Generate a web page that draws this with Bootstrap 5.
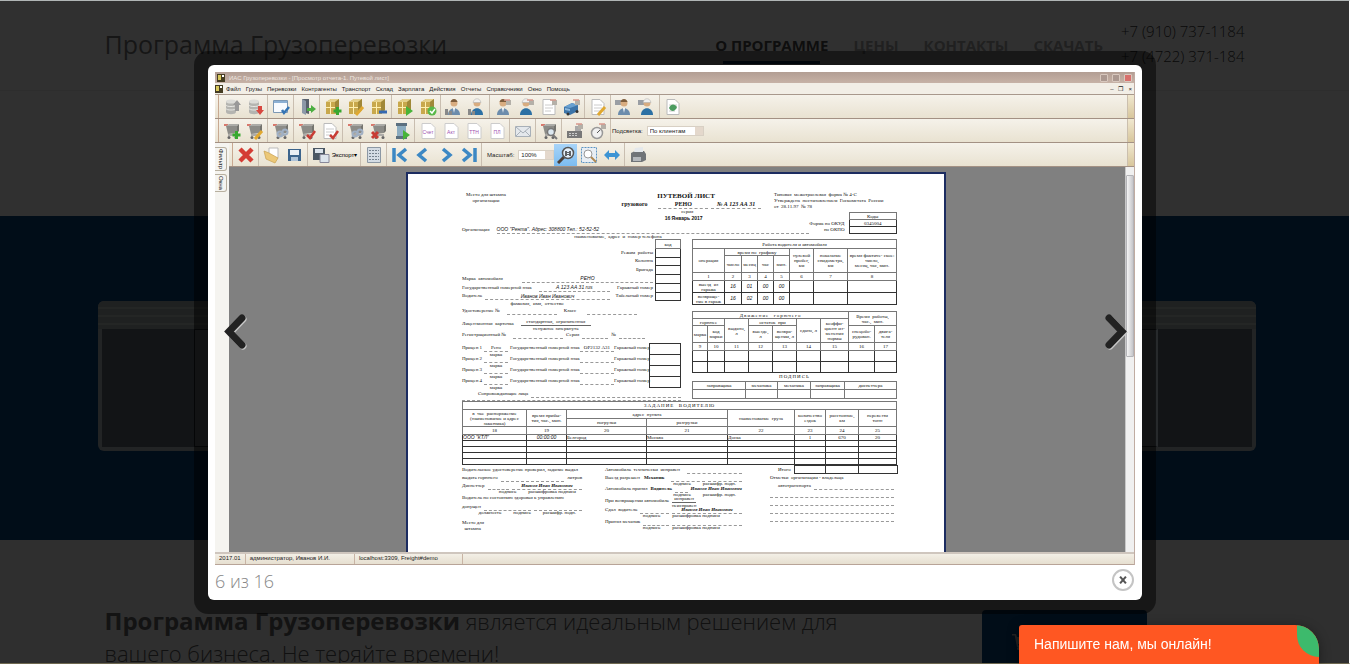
<!DOCTYPE html>
<html lang="ru">
<head>
<meta charset="utf-8">
<meta name="viewport" content="width=device-width, initial-scale=1">
<title>Программа Грузоперевозки</title>
<link href="https://cdn.jsdelivr.net/npm/bootstrap@5.3.0/dist/css/bootstrap.min.css" rel="stylesheet">
<style>
html,body{height:100%;overflow:hidden}
body{font-family:"Open Sans",sans-serif;background:#e8e8e8}
.site{height:100%;overflow:hidden;border-top:1px solid #b0b5b5;border-bottom:1px solid #6e6850;border-right:1px solid #fff;background:#e8e8e8}
.wrap{max-width:1140px;margin:0 auto}
.top{height:90px;background:#f0f0f0;border-bottom:1px solid #dedede}
.brand{font-size:25px;line-height:30px;color:#707070;text-decoration:none}
.menu{gap:25px;font-size:15px;font-weight:700;line-height:20px}
.menu a{color:#a0a0a0;text-decoration:none;padding-bottom:6px}
.menu a.on{color:#484848;position:relative}
.menu a.on::after{content:"";position:absolute;left:8px;right:8px;bottom:-3px;height:3px;background:#05417a}
.phones{font-size:15px;font-weight:300;line-height:25px;color:#333;padding:0 0 4px 18px}
.intro{height:125px;background:#f0f0f0}
.slides{background:#05417a;height:324px;padding:0 0 4px 4px}
.slides .inner{max-width:1158px;margin:0 auto}
.thumb{width:300px;height:150px;border-radius:6px;overflow:hidden;background:#d4d0c8;opacity:.8;padding:0 4px 4px}
.thumb .bars{height:28px;margin:0 -4px;background:repeating-linear-gradient(#c4bcb0 0 6px,#e0dccc 6px 8px)}
.thumb .desk{height:118px;background:#707070}
.thumb .leaf{background:#e0e0e0;border:1px solid #444}
.leaf.la{width:200px}.leaf.ra{width:200px;margin-right:94px;border-right:3px solid #f4f4f4}
.promo{padding:65px 98px 0 0}
.lead-txt{font-size:22px;line-height:32px;font-weight:300;color:#555}
.lead-txt b{font-size:24px;font-weight:700;color:#606060}
.buy{width:165px;height:60px;margin-top:5px;background:#05417a;border:0;border-radius:4px;color:#aaa}
.veil{position:fixed;inset:1px 1px 1px 0;background:rgba(0,0,0,.8)}
.stage{position:fixed;inset:0;padding-top:51px}
.frame{width:962px;padding:14px;border-radius:14px;background:rgba(0,0,0,.5)}
.box{background:#fff;border-radius:6px;padding:7px;position:relative}
.step{position:absolute;top:246px;width:28px;height:42px;border:0;padding:0;background:none}
.step.prev{left:14px}.step.next{right:12px}
.count{font-size:18px;font-weight:300;line-height:24px;color:#888}
.shut{width:22px;height:22px;border:2px solid #c4c4c4;border-radius:50%;background:#fff;padding:0;line-height:0;margin-right:1px}
.foot{height:28px;padding-top:4px}
/* application window */
.app{font:6px/8px "Liberation Sans",sans-serif;color:#222;background:#f2eee6;border-right:1px solid #c0aca2}
.tbar{height:11px;background:linear-gradient(#b29e94,#c7b2a6);color:#eee6e0;padding:0 2px}
.tbar i{width:8px;height:8px;border:1px solid #d8c8be;border-radius:1px;background:#ab9890}
.tbar i:last-child{background:#d8706c}
.mbar{height:12px;padding:0 2px 0 0;gap:5px;border-bottom:1px solid #a8988c}
.mbar svg{margin-right:-2px}
.mbar a{color:#222;text-decoration:none}
.tool{height:24px;background:linear-gradient(#f5f2ea,#e9e2d1);border-bottom:1px solid #a39184;padding-left:3px}
.tool .grp{padding:0 1px;border-right:1px solid #c9beb0;height:100%}
.tool .grp:nth-last-child(2){border-right:0}
.tool .grp:first-child{border-left:1px solid #c8a890}
.tool button{width:23px;height:22px;border:0;padding:0;background:none;line-height:0}
.tool button.text{width:50px;line-height:8px;white-space:nowrap;text-align:left;padding-left:3px}
.tool button.act{background:linear-gradient(#a8d4f8,#7cbcf0)}
.tool svg{width:18px;height:18px}
.tool .end{width:7px;background:linear-gradient(#f0e8d0,#d8c69c);border-left:1px solid #cbbfae}
.tool select{appearance:none;font:6px/8px "Liberation Sans",sans-serif;height:10px;border:1px solid #d8d0c4;border-radius:0;padding:0 2px;color:#222;background:#fff linear-gradient(90deg,#e4d8cc,#e4d8cc) right/8px 100% no-repeat}
.s1{width:57px}.s2{width:36px}
.rail{width:14px;background:#f5f4f0}
.rail span{display:block;writing-mode:vertical-rl;width:12px;line-height:11px;border:1px solid #b8b0a0;border-left:0;border-radius:0 3px 3px 0;padding:1px 0;margin-bottom:3px}
.work{background:#808080;height:385px;overflow:hidden}
.scr{width:9px;background:#f0f0f0;border-left:1px solid #c8c8c8;padding-top:8px}
.scr div{height:182px;border:1px solid #b4b4b8;border-radius:1px;background:linear-gradient(90deg,#f4f4f4,#c6c6ca)}
.sbar{height:13px;border-top:2px solid #cfc6be;border-bottom:1px solid #b8a498;background:linear-gradient(#f3efe6,#e6dfd0)}
.sbar span{border-right:1px solid #c8b4a4;padding:0 4px;line-height:9px}
/* waybill */
.paper{width:540px;margin-left:177px;margin-top:5px;padding:18px 47px 0 54px;background:#fff;border:1px solid #1c2c60;border-width:2px 2px 0;font:5px/6px "Liberation Serif",serif;color:#111;white-space:nowrap;height:400px}
.head{display:grid;grid-template-columns:48px 1fr 150px 13px 123px;height:20px}
.ttl{font-size:7px;font-weight:700;line-height:8px;color:#111}
.sub{font-size:6px;font-weight:700;line-height:8px}
.it{font-family:"Liberation Sans",sans-serif;font-style:italic}
.bi{font-weight:700;font-style:italic}
.codes{height:22px}
.codes .l{width:351px}
.date{font:700 5px/13px "Liberation Sans",sans-serif;padding:0 48px 0 144px}
.ln{display:flex;height:9px;line-height:9px;gap:3px}
.ln.s8,.ln .s8{height:8px;line-height:8px}
.ln.s3{height:3px;line-height:3px}
.org{width:312px;height:5px}
.fio{width:150px}
.mb2{margin-bottom:2px}.mt2{margin-top:2px}.mt6{margin-top:6px}
.dt{flex:1 1 0;border-bottom:1px dashed #999;text-align:center;min-width:0}
.d25{flex:0 0 26px}.d50{flex:0 0 50px}.d70{flex:0 0 70px}
.pr{width:40px;text-align:right}
.colA{width:219px;margin-right:11px}
.colB{width:206px}
.u{width:193px;padding-right:2px}
table.g{border-collapse:collapse;table-layout:fixed;width:100%;line-height:5px}
.g td,.g th{border:1px solid #777;padding:0;text-align:center;vertical-align:middle;font-weight:400;overflow:visible}
.g .k td{border-color:#333}
.q6{height:6px}.q7{height:7px}.q8{height:8px}.q9{height:9px}.q11{height:11px}.q12{height:12px}.q17{height:17px}
.g.code{width:26px}.g.codeb{width:49px}.g.trl{width:32px}
.wide{letter-spacing:1px}
.tr4{display:grid;grid-template-columns:22px 24px 2px 70px 34px 35px;height:11px;line-height:9px}
.tr4 small{display:block;font-size:5px;line-height:6px;text-align:center}
.tr4 .dt{height:9px}
.fr{line-height:6px;text-align:center}
.fr u{display:block;text-decoration:none;border-bottom:1px solid #666}
.sig{display:grid;grid-template-columns:124px 163px 149px}
.sig .c1{padding-right:4px}.sig .c2{padding-left:19px;padding-right:7px}.sig .c3{padding-left:21px}
.cap{display:flex;height:3px;line-height:3px;justify-content:flex-end;gap:12px;padding-right:6px}
.c3 .tot{width:104px}
/* chat */
.chat{position:fixed;right:31px;bottom:0;width:300px;height:39px;border:0;text-align:left;background:#ff5722;color:#fff;font:14px/39px "Liberation Sans",sans-serif;padding:0 15px;border-radius:3px 24px 0 0;box-shadow:0 2px 12px rgba(0,0,0,.4);overflow:hidden}
.chat::after{content:"";position:absolute;right:0;top:0;width:22px;height:32px;background:#3dba6c;border-radius:0 22px 0 22px}
</style>
</head>
<body>
<div class="site">
  <header class="top"><div class="wrap d-flex align-items-center h-100">
    <a class="brand me-auto mb-1" href="#">Программа Грузоперевозки</a>
    <nav class="menu d-flex pt-1"><a class="on" href="#">О ПРОГРАММЕ</a><a href="#">ЦЕНЫ</a><a href="#">КОНТАКТЫ</a><a href="#">СКАЧАТЬ</a></nav>
    <div class="phones">+7 (910) 737-1184<br>+7 (4722) 371-184</div>
  </div></header>
  <div class="intro"></div>
  <section class="slides d-flex align-items-center"><div class="inner w-100 d-flex justify-content-between">
    <div class="thumb"><div class="bars"></div><div class="desk d-flex"><div class="leaf la ms-auto"></div></div></div>
    <div class="thumb"><div class="bars"></div><div class="desk d-flex"><div class="leaf ra"></div></div></div>
  </div></section>
  <main class="wrap promo d-flex justify-content-between align-items-start">
    <p class="lead-txt mb-0"><b>Программа Грузоперевозки</b> является идеальным решением для<br>вашего бизнеса. Не теряйте времени!</p>
    <button class="buy text-start" aria-label="Купить"><svg class="ms-4" width="18" height="16" viewBox="0 0 18 16" fill="currentColor"><path d="M0 0h4l1 3h12l-2 7H6l.4 1.500H15V13H5L2.700 1.500H0z"/><circle cx="6.500" cy="14.500" r="1.500"/><circle cx="13.500" cy="14.500" r="1.500"/></svg></button>
  </main>
</div>
<div class="veil"></div>
<div class="stage d-flex justify-content-center align-items-start">
 <div class="frame mw-100"><div class="box">
  <div class="app">
   <div class="tbar d-flex align-items-center gap-1"><svg width="8" height="8"><path fill="#443c22" d="M0 0h8v8H0z"/><path fill="#d8c85c" d="M1 1h3v5H1z"/><path fill="#fff" d="M5 1h2v2H5z"/></svg><span class="me-auto">ИАС Грузоперевозки - [Просмотр отчета-1. Путевой лист]</span><i></i><i></i><i></i></div>
   <div class="mbar d-flex align-items-center"><svg width="8" height="8"><path fill="#443c22" d="M0 0h8v8H0z"/><path fill="#d8c85c" d="M1 1h3v5H1z"/><path fill="#fff" d="M5 1h2v2H5z"/></svg><a href="#">Файл</a><a href="#">Грузы</a><a href="#">Перевозки</a><a href="#">Контрагенты</a><a href="#">Транспорт</a><a href="#">Склад</a><a href="#">Зарплата</a><a href="#">Действия</a><a href="#">Отчеты</a><a href="#">Справочники</a><a href="#">Окно</a><a href="#" class="me-auto">Помощь</a><span>–</span><span>❐</span><span>×</span></div>
   <div class="tool d-flex align-items-stretch" id="bar1"><div class="end ms-auto"></div></div>
   <div class="tool d-flex align-items-stretch" id="bar2"><div class="grp d-flex align-items-center gap-1"><label for="hl">Подсветка:</label><select id="hl" class="s1"><option>По клиентам</option></select></div><div class="end ms-auto"></div></div>
   <div class="d-flex">
    <div class="rail pt-1"><span>Фильтр</span><span>Окна</span></div>
    <div class="flex-fill">
     <div class="tool d-flex align-items-stretch" id="bar3"><div class="end ms-auto"></div></div>
     <div class="d-flex"><div class="work flex-fill">
<div class="paper">
 <div class="head">
  <div class="text-center">Место для штампа<br>организации</div><div></div>
  <div><div class="ttl text-center">ПУТЕВОЙ ЛИСТ</div>
   <div class="ln sub"><span class="me-2">&nbsp; &nbsp; &nbsp; &nbsp;грузового</span><span class="dt">РЕНО</span><span class="dt bi">№ А 123 АА 31</span></div><div class="text-center fr">&nbsp; серия</div></div><div></div>
  <div>Типовая&nbsp; межотраслевая&nbsp; форма № 4-С<br>Утверждена&nbsp; постановлением&nbsp; Госкомстата&nbsp; России<br>от&nbsp; 28.11.97&nbsp; № 78</div>
 </div>
 <div class="codes d-flex">
  <div class="l"><div class="date text-center">16 Январь 2017</div><div class="ln"><span class="me-1">Организация</span><span class="dt it text-start">ООО "Рента". Адрес: 308800 Тел.: 52-52-52</span></div></div>
  <div class="flex-fill pe-1 d-flex flex-column align-items-end"><span class="ln"></span><span>Форма по ОКУД</span><span>по ОКПО</span></div>
  <table class="g codeb"><tr class="q7"><th>Коды</th></tr><tr class="q7 k"><td>0345004</td></tr><tr class="q7 k"><td></td></tr></table>
 </div>
 <div class="fr org">наименование,&nbsp; адрес&nbsp; и&nbsp; номер телефона</div>
 <div class="d-flex">
  <div class="colA">
   <div class="d-flex">
    <div class="u"><div class="ln"></div><div class="ln justify-content-end">Режим&nbsp; работы</div><div class="ln s8 justify-content-end">Колонна</div><div class="ln justify-content-end">Бригада</div>
     <div class="ln"><span class="me-3">Марка&nbsp; автомобиля</span><span class="dt it">РЕНО</span></div>
     <div class="ln"><span class="me-1">Государственный номерной знак</span><span class="dt it">А 123 АА 31 rus</span><span class="pr">Гаражный номер</span></div>
     <div class="ln s8"><span>Водитель</span><span class="dt it">Иванов Иван Иванович</span><span class="pr">Табельный номер</span></div></div>
    <table class="g code"><tr class="q9"><th>код</th></tr><tr class="q9 k"><td></td></tr><tr class="q8 k"><td></td></tr><tr class="q9 k"><td></td></tr><tr class="q9 k"><td></td></tr><tr class="q9 k"><td></td></tr><tr class="q8 k"><td></td></tr></table>
   </div>
   <div class="fr fio">фамилия,&nbsp; имя,&nbsp; отчество</div>
   <div class="ln s8"><span class="me-1">Удостоверение №</span><span class="dt d50"></span><span class="ms-1">Класс</span><span class="dt d50 ms-2"></span></div>
   <div class="ln mt-1 mb2"><span class="me-1">Лицензионная&nbsp; карточка</span><div class="fr d70"><u>стандартная,&nbsp; ограниченная</u>ненужное зачеркнуть</div></div>
   <div class="ln mb-1"><span class="me-1">Регистрационный №</span><span class="dt d50"></span><span>Серия</span><span class="dt d25"></span><span>№</span><span class="dt d25"></span></div>
   <div class="d-flex"><div class="flex-fill" id="trailers"></div>
    <table class="g trl"><tr class="q11 k"><td></td></tr><tr class="q11 k"><td></td></tr><tr class="q11 k"><td></td></tr><tr class="q11 k"><td></td></tr></table></div>
   <div class="ln mt2 s8"><span class="ms-3">Сопровождающие лица</span><span class="dt"></span></div>
   <div class="ln s3"><span class="dt"></span></div>
  </div>
  <div class="colB">
   <table class="g"><colgroup><col width="32"><col width="17"><col width="16"><col width="16"><col width="16"><col width="24"><col width="34"><col></colgroup>
    <tr class="q9"><th colspan="8">Работа водителя и автомобиля</th></tr>
    <tr class="q7"><th rowspan="2">операция</th><th colspan="4">время по&nbsp; графику</th><th rowspan="2">нулевой<br>пробег,<br>км</th><th rowspan="2">показание<br>спидометра,<br>км</th><th rowspan="2">время фактиче- ское:<br>число,<br>месяц, час, мин.</th></tr>
    <tr class="q17"><th>число</th><th>месяц</th><th>час</th><th>мин.</th></tr>
    <tr class="q8"><td>1</td><td>2</td><td>3</td><td>4</td><td>5</td><td>6</td><td>7</td><td>8</td></tr>
    <tr class="q12 k"><td>выезд&nbsp; из<br>гаража</td><td class="it">16</td><td class="it">01</td><td class="it">00</td><td class="it">00</td><td></td><td></td><td></td></tr>
    <tr class="q12 k"><td>возвраще-<br>ние в гараж</td><td class="it">16</td><td class="it">02</td><td class="it">00</td><td class="it">00</td><td></td><td></td><td></td></tr></table>
   <table class="g mt6"><colgroup><col width="15"><col width="17"><col width="24"><col width="24"><col width="24"><col width="24"><col width="28"><col width="26"><col></colgroup>
    <tr class="q7"><th colspan="7" class="wide">Движение&nbsp; горючего</th><th colspan="2" rowspan="2">Время&nbsp; работы,<br>час.,&nbsp; мин.</th></tr>
    <tr class="q7"><th colspan="2">горючее</th><th rowspan="2">выдано,<br>л</th><th colspan="2">остаток&nbsp; при</th><th rowspan="2">сдано, л</th><th rowspan="2">коэффи-<br>циент из-<br>менения<br>нормы</th></tr>
    <tr class="q17"><th>марка</th><th>код<br>марки</th><th>выезде,<br>л</th><th>возвра-<br>щении, л</th><th>спецобо-<br>рудован.</th><th>двига-<br>теля</th></tr>
    <tr class="q8"><td>9</td><td>10</td><td>11</td><td>12</td><td>13</td><td>14</td><td>15</td><td>16</td><td>17</td></tr>
    <tr class="q11 k"><td></td><td></td><td></td><td></td><td></td><td></td><td></td><td></td><td></td></tr>
    <tr class="q11 k"><td></td><td></td><td></td><td></td><td></td><td></td><td></td><td></td><td></td></tr></table>
   <div class="ln s8 justify-content-center wide">ПОДПИСЬ</div>
   <table class="g"><colgroup><col width="53"><col width="32"><col width="33"><col width="34"><col></colgroup>
    <tr class="q8"><th>заправщика</th><th>механика</th><th>механика</th><th>заправщика</th><th>диспетчера</th></tr>
    <tr class="q9"><td></td><td></td><td></td><td></td><td></td></tr></table>
  </div>
 </div>
 <table class="g"><colgroup><col width="64"><col width="40"><col width="80"><col width="81"><col width="67"><col width="31"><col width="33"><col></colgroup>
  <tr class="q8"><th colspan="8" class="wide">ЗАДАНИЕ&nbsp; ВОДИТЕЛЮ</th></tr>
  <tr class="q9"><th rowspan="2">в&nbsp; чье&nbsp; распоряжение<br>(наименование и адрес<br>заказчика)</th><th rowspan="2">время прибы-<br>тия, час., мин.</th><th colspan="2">адрес&nbsp; пункта</th><th rowspan="2">наименование&nbsp; груза</th><th rowspan="2">количество<br>ездок</th><th rowspan="2">расстояние,<br>км</th><th rowspan="2">перевезти<br>тонн</th></tr>
  <tr class="q8"><th>погрузки</th><th>разгрузки</th></tr>
  <tr class="q8"><td>18</td><td>19</td><td>20</td><td>21</td><td>22</td><td>23</td><td>24</td><td>25</td></tr>
  <tr class="q6 k"><td class="it text-start">ООО "КТЛ"</td><td class="it">00:00:00</td><td class="text-start">Белгород</td><td class="text-start">Москва</td><td class="text-start">Доска</td><td>1</td><td>670</td><td>20</td></tr>
  <tr class="q6 k"><td></td><td></td><td></td><td></td><td></td><td></td><td></td><td></td></tr>
  <tr class="q6 k"><td></td><td></td><td></td><td></td><td></td><td></td><td></td><td></td></tr>
  <tr class="q6 k"><td></td><td></td><td></td><td></td><td></td><td></td><td></td><td></td></tr>
  <tr class="q6 k"><td></td><td></td><td></td><td></td><td></td><td></td><td></td><td></td></tr></table>
 <div class="sig">
  <div class="c1"><div class="ln">Водительское удостоверение проверил, задание выдал</div>
   <div class="ln s8"><span>выдать горючего</span><span class="dt"></span><span>литров</span></div>
   <div class="ln s8"><span>Диспетчер</span><span class="dt"></span><span class="dt d70 bi">Иванов Иван Иванович</span></div><div class="cap"><span>подпись</span><span>расшифровка подписи</span></div>
   <div class="ln">Водитель по состоянию здоровья к управлению</div>
   <div class="ln"><span>допущен</span><span class="dt"></span><span class="dt"></span></div><div class="cap"><span>должность</span><span>подпись</span><span>расшифр. подп.</span></div>
   <div class="mt6">Место для<br>&nbsp; штампа</div></div>
  <div class="c2"><div class="ln"><span>Автомобиль&nbsp; технически&nbsp; исправен</span><span class="dt ms-1"></span></div>
   <div class="ln s8"><span>Выезд разрешен</span><b>&nbsp;Механик</b><span class="dt ms-1"></span><span class="dt"></span></div><div class="cap"><span>подпись</span><span>расшифр. подп.</span></div>
   <div class="ln s8"><span>Автомобиль принял</span><b>Водитель</b><span class="dt"></span><span class="d50 bi">Иванов Иван Иванович</span></div><div class="cap"><span>подпись</span><span>расшифр. подп.</span></div>
   <div class="ln"><span>При возвращении автомобиль</span><div class="fr"><u>исправен</u>неисправен</div></div>
   <div class="ln"><span>Сдал&nbsp; водитель</span><span class="dt"></span><span class="dt d70 bi">Иванов Иван Иванович</span></div><div class="cap"><span>подпись</span><span class="me-3">расшифровка подписи</span></div>
   <div class="ln"><span>Принял механик</span><span class="dt"></span><span class="dt d70"></span></div><div class="cap"><span>подпись</span><span class="me-3">расшифровка подписи</span></div></div>
  <div class="c3"><div class="d-flex justify-content-between align-items-center"><span class="ms-2">Итого</span><table class="g tot"><colgroup><col width="31"><col width="33"><col></colgroup><tr class="q8 k"><td></td><td></td><td></td></tr></table></div>
   <div class="ln s8">Отметки&nbsp; организации - владельца</div>
   <div class="ln s8 pe-1"><span class="ms-2">автотранспорта</span><span class="dt"></span></div>
   <div class="ln s8 pe-1"><span class="dt"></span></div><div class="ln s8 pe-1"><span class="dt"></span></div><div class="ln s8 pe-1"><span class="dt"></span></div><div class="ln s8 pe-1"><span class="dt"></span></div></div>
 </div>
</div>
     </div><div class="scr"><div></div></div></div>
    </div>
   </div>
   <div class="sbar d-flex"><span>2017.01</span><span class="pe-4">администратор, Иванов И.И.</span><span class="pe-4">localhost:3309, Freight#demo</span></div>
  </div>
  <div class="foot d-flex justify-content-between align-items-start"><span class="count">6 из 16</span>
   <button class="shut" aria-label="Закрыть"><svg width="10" height="10" viewBox="0 0 12 12" stroke="#555" stroke-width="2.500"><path d="M2.500 2l7 8M9.500 2l-7 8"/></svg></button></div>
  <button class="step prev" aria-label="Назад"><svg width="28" height="42" viewBox="0 0 28 42" fill="none" stroke-width="7" stroke-linecap="round" stroke-linejoin="miter"><path stroke="#c8c8c8" d="M21 8L8 21.500 21 35"/><path stroke="#222" d="M20 7L7 20.500 20 34"/></svg></button>
  <button class="step next" aria-label="Вперёд"><svg width="28" height="42" viewBox="0 0 28 42" fill="none" stroke-width="7" stroke-linecap="round"><path stroke="#c8c8c8" d="M8 8l13 13.500L8 35"/><path stroke="#222" d="M7 7l13 13.500L7 34"/></svg></button>
 </div></div>
</div>
<button class="chat">Напишите нам, мы онлайн!</button>
<script>
const P={
 db:'<path fill="#b4b4b0" d="M3 3v11c0 3 10 3 10 0V3z"/><ellipse cx="8" cy="3.500" rx="5" ry="2" fill="#dcdcd8"/><path d="M3 7c0 2 10 2 10 0M3 10.500c0 2 10 2 10 0" fill="none" stroke="#e8e8e4"/>',
 up:'<path fill="#999" d="M14 2l4 5h-2v6h-4V7h-2z"/>',down:'<path fill="#d84840" d="M14 17l-4-5h2V8h4v4h2z"/>',
 win:'<path fill="#f8fbff" stroke="#7c98b4" d="M1.500 2.500h14v12h-14z"/><path fill="#8cb0d4" d="M2 3h13v2H2z"/>',blue:'<path stroke="#3474b4" stroke-width="2.500" fill="none" d="M10 12l2 3 5-6"/>',
 door:'<path fill="#58606c" d="M4 1h7v15l-7-2z"/><path fill="#8c98a8" d="M4 1l4 2v14l-4-2z"/><path fill="#4cae40" d="M9 10h4V7l5 4-5 4v-2H9z"/>',
 box:'<path fill="#c8a84c" d="M2 4l5-3h8v11l-4 4H2z"/><path fill="#e4d08c" d="M2 4l5-3h8l-4 3z"/><path fill="#a08838" d="M11 4l4-3v11l-4 4z"/><path stroke="#fff0b0" d="M6.500 4v12M2 9.500h9"/>',
 plus:'<path stroke="#38a830" stroke-width="3" d="M13.500 9v8M9.500 13h8"/>',pen:'<path stroke="#e0a830" stroke-width="3" d="M9 17l7-8"/>',minus:'<path stroke="#3468b0" stroke-width="3" d="M9 14h8"/>',
 play:'<path fill="#48b438" d="M10 8l7 5-7 5z"/>',ok:'<circle cx="13" cy="13" r="4.500" fill="#58b848"/><path stroke="#fff" stroke-width="1.500" fill="none" d="M11 13l2 2 3-4"/>',
 man:'<circle cx="9" cy="5" r="3.500" fill="#d8ac80"/><path fill="#7c5c3c" d="M5.500 4c1-4 6-4 7 0z"/><path fill="#6c8cac" d="M3 17c0-9 12-9 12 0z"/><path fill="#fff" d="M8 10h2l-1 5z"/>',
 wrk:'<circle cx="9" cy="5" r="3.500" fill="#d8ac80"/><path fill="#f0f0f0" stroke="#aaa" stroke-width=".5" d="M5 4.500c1-5 7-5 8 0z"/><path fill="#2c70a4" d="M3 17c0-9 12-9 12 0z"/>',
 fl:'<path fill="#888" d="M0 11h3v6H0zM4 13h3v4H4z"/>',tag:'<path fill="#b4b0a8" d="M12 2h5v5h-5z"/><path stroke="#d8988c" stroke-width="1.500" d="M10 2h6"/>',
 doc:'<path fill="#fff" stroke="#bbb" d="M3 1.500h8l4 4v11H3z"/><path stroke="#ccc" d="M5 7h8M5 10h8M5 13h6"/>',
 truck:'<path fill="#3c74a8" d="M1 9l8-4 6 2v6l-8 4-6-2z"/><path fill="#8cb8dc" d="M2 10l5 1v2l-5-1z"/><path fill="#68a0d0" d="M1 9l8-4 6 2-8 3z"/><circle cx="5" cy="16" r="1.500" fill="#333"/><circle cx="14" cy="13.500" r="1.500" fill="#333"/>',
 cam:'<path fill="#9a9ea4" d="M0 2h7v5H0z"/>',
 cart:'<path stroke="#d8786c" stroke-width="2" d="M1 3h4"/><path fill="#8c8c88" d="M3 4h11v7l-9 1z"/><path fill="#acaca8" d="M3 4l3-2h10l-2 2z"/><path fill="#74746f" d="M14 4l2-2v7l-2 2z"/><path stroke="#999" stroke-width="1.500" d="M5 13h9"/><circle cx="6" cy="15.500" r="1.500" fill="#666"/><circle cx="13" cy="15.500" r="1.500" fill="#666"/>',
 ref:'<circle cx="8" cy="12" r="2.500" fill="none" stroke="#a0b0c4" stroke-width="2"/><circle cx="13" cy="10" r="2.500" fill="none" stroke="#a0b0c4" stroke-width="2"/>',
 red:'<path stroke="#c83c34" stroke-width="2.500" fill="none" d="M9 13l3 3 5-7"/>',rx:'<path stroke="#c83c34" stroke-width="3" d="M2 10l6 6M8 10l-6 6"/>',
 glass:'<path fill="#8cacc0" d="M4 2h9v13H4z"/><path fill="#5c7080" d="M3 1h11v3H3zM3 14h11v3H3z"/>',
 mail:'<path fill="#e4e8ec" stroke="#a8b0b8" d="M1.500 4.500h15v10h-15z"/><path fill="none" stroke="#a8b0b8" d="M2 5l7 6 7-6M2 14l5-5M16 14l-5-5"/>',
 lens:'<circle cx="11" cy="10" r="3.500" fill="#dce8f0" stroke="#777" stroke-width="1.500"/><path stroke="#777" stroke-width="2" d="M13 13l4 4"/>',
 reg:'<path fill="#787878" d="M1 9h15v7H1z"/><path stroke="#ccc" d="M3 11.500h8M3 13.500h8" stroke-dasharray="2 1"/><path fill="#aaa" d="M9 4h6v5H9z"/>',
 clock:'<circle cx="8" cy="11" r="5.500" fill="#f0f0f0" stroke="#999" stroke-width="1.500"/><path stroke="#555" d="M8 11l3-3"/>',
 leaf:'<path fill="#4c9c60" d="M5 10c2-5 6-4 8-1-2 5-6 5-8 1z"/>',
 del:'<path stroke="#d43c34" stroke-width="4.500" d="M3 3l12 12M15 3L3 15"/>',
 open:'<path fill="#fff" stroke="#bbb" d="M6 2h9v10H6z"/><path fill="#ecc878" stroke="#c8a050" stroke-width=".7" d="M1 5l5 2 9 5-3 5-9-4z"/>',
 save:'<path fill="#3c648c" d="M2 3h13v12H2z"/><path fill="#e8eef4" d="M4 4h9v5H4z"/><path fill="#b0c4d8" d="M5 11h7v4H5z"/>',
 exp:'<path fill="#4c5864" d="M1 2h12v12H1z"/><path fill="#dce4ec" d="M3 3h8v4H3zM8 9h9v7H8z"/><path stroke="#889" fill="none" d="M8 8.500h9v8H8z"/>',
 list:'<path fill="#d4dce4" stroke="#8c98a4" d="M2.500 1.500h13v15h-13z"/><path stroke="#76828e" stroke-dasharray="2 1" d="M4 4.500h10M4 7.500h10M4 10.500h10M4 13.500h10"/>',
 first:'<path stroke="#3c88c4" stroke-width="3.500" fill="none" d="M3 2v14M15 3L8 9l7 6"/>',prev:'<path stroke="#3c88c4" stroke-width="3.500" fill="none" d="M12 3L5 9l7 6"/>',
 next:'<path stroke="#3c88c4" stroke-width="3.500" fill="none" d="M6 3l7 6-7 6"/>',last:'<path stroke="#3c88c4" stroke-width="3.500" fill="none" d="M3 3l7 6-7 6M15 2v14"/>',
 zoom:'<path stroke="#4c4038" stroke-width="3" d="M1 17l6-6"/><circle cx="11" cy="7" r="5.500" fill="#e4f0fa" stroke="#555" stroke-width="1.500"/><path stroke="#333" stroke-width="1.500" d="M9 5v5M13 5v5M11 6v1M11 8v1"/>',
 fit:'<path fill="#e8eef4" stroke="#5c94c4" stroke-dasharray="2 1" d="M1.500 1.500h15v15h-15z"/><circle cx="8" cy="8" r="4" fill="#fff" stroke="#999"/><path stroke="#b08850" stroke-width="2" d="M11 11l5 5"/>',
 wide:'<path fill="#3c94d4" d="M1 9l5-5v3h6V4l5 5-5 5v-3H6v3z"/>',
 prn:'<path fill="#707478" d="M2 7l4-2h9l2 3v6l-4 2H2z"/><path fill="#e4e8ec" d="M6 2l8-1v5H5z"/><path fill="#b4b8bc" d="M4 11h8v4H4z"/>'};
const t=(s)=>'<path fill="#fff" stroke="#ccc" d="M3 1.500h9l4 4v11H3z"/><text x="9" y="12" font-size="5" text-anchor="middle" fill="#a050b0">'+s+'</text>';
const svg=(n)=>'<svg viewBox="0 0 18 18" fill="none">'+(n[0]==='!'?t(n.slice(1)):n.split(' ').map(k=>P[k]).join(''))+'</svg>';
const grp=(g)=>'<div class="grp d-flex align-items-center">'+g.map(n=>n==='exp'?'<button class="text">'+svg(n)+' Экспорт▾</button>':'<button class="'+(n==='zoom'?'act':'')+'" aria-label="'+n+'">'+svg(n)+'</button>').join('')+'</div>';
const put=(id,a)=>document.getElementById(id).insertAdjacentHTML('afterbegin',a.map(grp).join(''));
put('bar1',[['db up','db down'],['win blue'],['door'],['box plus','box pen','box minus'],['box play','box ok'],['man fl','wrk fl'],['man tag','wrk tag','doc tag','truck tag'],['doc pen'],['cam man','cam wrk'],['doc leaf']]);
put('bar2',[['cart plus','cart pen'],['cart ref'],['cart red','doc red'],['cart ref','cart rx','glass play'],['!Счет','!Акт','!ТТН','!ПЛ'],['mail'],['cart lens'],['reg tag','clock tag']]);
put('bar3',[['del'],['open','save'],['exp'],['list'],['first','prev','next','last'],['zoom','fit','wide'],['prn']]);
document.querySelector('#bar3 .act').insertAdjacentHTML('beforebegin','<label for="zm" class="px-1">Масштаб:</label><select id="zm" class="s2"><option>100%</option></select>');
document.getElementById('trailers').innerHTML=[1,2,3,4].map(i=>`<div class="tr4"><span>Прицеп ${i}</span><div><div class="dt">${i===1?'Рено':''}</div><small>марка</small></div><i></i><span>Государственный номерной знак</span><span class="dt">${i===1?'ОР2132 А31':''}</span><span>Гаражный номер</span></div>`).join('');
</script>
</body>
</html>
